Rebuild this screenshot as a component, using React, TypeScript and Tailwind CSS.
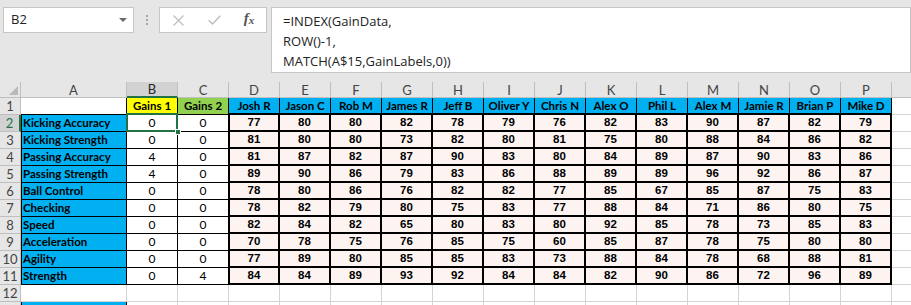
import React from 'react'

const COLS = ['A', 'B', 'C', 'D', 'E', 'F', 'G', 'H', 'I', 'J', 'K', 'L', 'M', 'N', 'O', 'P']

const players = [
  'Josh R', 'Jason C', 'Rob M', 'James R', 'Jeff B', 'Oliver Y', 'Chris N',
  'Alex O', 'Phil L', 'Alex M', 'Jamie R', 'Brian P', 'Mike D',
]

type Row = { label: string; g1: number; g2: number; vals: number[] }

const rows: Row[] = [
  { label: 'Kicking Accuracy', g1: 0, g2: 0, vals: [77, 80, 80, 82, 78, 79, 76, 82, 83, 90, 87, 82, 79] },
  { label: 'Kicking Strength', g1: 0, g2: 0, vals: [81, 80, 80, 73, 82, 80, 81, 75, 80, 88, 84, 86, 82] },
  { label: 'Passing Accuracy', g1: 4, g2: 0, vals: [81, 87, 82, 87, 90, 83, 80, 84, 89, 87, 90, 83, 86] },
  { label: 'Passing Strength', g1: 4, g2: 0, vals: [89, 90, 86, 79, 83, 86, 88, 89, 89, 96, 92, 86, 87] },
  { label: 'Ball Control', g1: 0, g2: 0, vals: [78, 80, 86, 76, 82, 82, 77, 85, 67, 85, 87, 75, 83] },
  { label: 'Checking', g1: 0, g2: 0, vals: [78, 82, 79, 80, 75, 83, 77, 88, 84, 71, 86, 80, 75] },
  { label: 'Speed', g1: 0, g2: 0, vals: [82, 84, 82, 65, 80, 83, 80, 92, 85, 78, 73, 85, 83] },
  { label: 'Acceleration', g1: 0, g2: 0, vals: [70, 78, 75, 76, 85, 75, 60, 85, 87, 78, 75, 80, 80] },
  { label: 'Agility', g1: 0, g2: 0, vals: [77, 89, 80, 85, 85, 83, 73, 88, 84, 78, 68, 88, 81] },
  { label: 'Strength', g1: 0, g2: 4, vals: [84, 84, 89, 93, 92, 84, 84, 82, 90, 86, 72, 96, 89] },
]

function FormulaBar() {
  return (
    <div className="flex h-[82px] items-start bg-[#e6e6e6] pt-[7px] pl-[3px]">
      {/* Name box */}
      <div className="flex h-[26px] w-[164px] items-center justify-between border border-[#c6c6c6] bg-white pr-[6px] pl-[7px] font-['Open_Sans',sans-serif] text-[13px] text-[#222]">
        <span>B2</span>
        <svg width="8" height="4" viewBox="0 0 8 4">
          <path d="M0 0H8L4 4Z" fill="#6a6a6a" />
        </svg>
      </div>

      {/* Grip dots */}
      <div className="flex h-[26px] w-[32px] flex-col items-center justify-center gap-[2px]">
        <span className="h-[2px] w-[2px] bg-[#a6a6a6]" />
        <span className="h-[2px] w-[2px] bg-[#a6a6a6]" />
        <span className="h-[2px] w-[2px] bg-[#a6a6a6]" />
      </div>

      {/* Cancel / Enter / fx */}
      <div className="flex h-[26px] w-[108px] items-center border border-[#c6c6c6] bg-white">
        <div className="flex w-[36px] justify-center pl-[1px]">
          <svg width="11" height="11" viewBox="0 0 11 11">
            <path d="M0.5 0.5L10.5 10.5M10.5 0.5L0.5 10.5" stroke="#bdbdbd" strokeWidth="1.2" fill="none" />
          </svg>
        </div>
        <div className="flex w-[36px] justify-center">
          <svg width="13" height="10" viewBox="0 0 13 10">
            <path d="M0.7 5.3L4.5 9L12.3 0.8" stroke="#bdbdbd" strokeWidth="1.4" fill="none" />
          </svg>
        </div>
        <div className="flex w-[34px] justify-center font-['Liberation_Serif',serif] text-[15px] leading-none font-bold text-[#555] italic">
          <span>f</span>
          <span className="text-[11px] leading-[18px]">x</span>
        </div>
      </div>

      {/* Formula text */}
      <div className="ml-[4px] h-[66px] w-[640px] shrink-0 border border-[#c6c6c6] bg-white pt-[3px] pl-[11px] font-['Open_Sans',sans-serif] text-[13px] leading-[20px] text-[#222]">
        <div>=INDEX(GainData,</div>
        <div>ROW()-1,</div>
        <div>MATCH(A$15,GainLabels,0))</div>
      </div>
    </div>
  )
}

function RowNum({ n, active }: { n?: number; active?: boolean }) {
  if (active) {
    return (
      <div className="flex items-center justify-center border-r-2 border-b border-r-[#217346] border-b-[#bfbfbf] bg-[#d2d2d2] text-[13px] text-[#217346]">
        {n}
      </div>
    )
  }
  return (
    <div className="flex items-center justify-center border-r border-b border-[#bfbfbf] bg-[#e6e6e6] text-[13px] text-[#444]">
      {n}
    </div>
  )
}

function Sheet() {
  return (
    <div className="grid grid-cols-[21px_106px_repeat(15,51px)_1fr] grid-rows-[16px_repeat(13,17px)] font-['Lato',sans-serif] leading-[16px] text-black">
      {/* Column headers */}
      <div className="relative border-r border-b border-[#bfbfbf] bg-[#e6e6e6]">
        <svg className="absolute right-[2px] bottom-[2px]" width="9" height="9" viewBox="0 0 9 9">
          <path d="M9 0V9H0Z" fill="#b9b9b9" />
        </svg>
      </div>
      {COLS.map((c) =>
        c === 'B' ? (
          <div
            key={c}
            className="flex items-center justify-center border-r border-b-2 border-r-[#bfbfbf] border-b-[#217346] bg-[#d2d2d2] text-[13px] text-[#262626]"
          >
            {c}
          </div>
        ) : (
          <div
            key={c}
            className="flex items-center justify-center border-r border-b border-[#bfbfbf] bg-[#e6e6e6] text-[13px] text-[#444]"
          >
            {c}
          </div>
        )
      )}
      <div className="border-b border-[#bfbfbf] bg-[#e6e6e6]" />

      {/* Row 1 */}
      <RowNum n={1} />
      <div className="border-r border-b border-black bg-white" />
      <div className="flex items-center justify-center border-r border-b border-black bg-[#ffff00] text-[11.5px] font-bold">
        Gains 1
      </div>
      <div className="flex items-center justify-center border-r border-b border-black bg-[#92d050] text-[11.5px] font-bold">
        Gains 2
      </div>
      {players.map((p) => (
        <div
          key={p}
          className="flex items-center justify-center border-r border-b-2 border-black bg-[#00b0f0] text-[11.5px] font-bold"
        >
          {p}
        </div>
      ))}
      <div className="border-b border-[#d4d4d4]" />

      {/* Rows 2 - 11 */}
      {rows.map((r, i) => (
        <React.Fragment key={r.label}>
          <RowNum n={i + 2} active={i === 0} />
          <div className="flex items-center border-r border-b border-l border-black bg-[#00b0f0] pl-[1px] text-[11.5px] font-bold">
            {r.label}
          </div>
          <div className="relative flex items-center justify-center border-r border-b border-black bg-white text-[12px]">
            {r.g1}
            {i === 0 && (
              <>
                <div className="absolute -top-[2px] -right-[1px] -bottom-[1px] -left-[1px] z-10 border-2 border-[#217346]" />
                <div className="absolute -right-[4px] -bottom-[4px] z-20 h-[6px] w-[6px] border border-white bg-[#217346]" />
              </>
            )}
          </div>
          <div className="flex items-center justify-center border-r border-b border-black bg-white text-[12px]">
            {r.g2}
          </div>
          {r.vals.map((v, j) => (
            <div
              key={j}
              className={
                j === 0
                  ? "flex items-center justify-center border-r-2 border-b-2 border-l border-black bg-[#fdf4f2] pb-[1px] font-['Liberation_Sans',Arial,sans-serif] text-[11.5px] font-bold"
                  : "flex items-center justify-center border-r-2 border-b-2 border-black bg-[#fdf4f2] pb-[1px] font-['Liberation_Sans',Arial,sans-serif] text-[11.5px] font-bold"
              }
            >
              {v}
            </div>
          ))}
          <div className="border-b border-[#d4d4d4]" />
        </React.Fragment>
      ))}

      {/* Row 12 */}
      <RowNum n={12} />
      {COLS.map((c) => (
        <div key={c} className="border-r border-b border-[#d4d4d4] bg-white" />
      ))}
      <div className="border-b border-[#d4d4d4]" />

      {/* Row 13 (only its top edge shows) */}
      <RowNum />
      <div className="border-r border-l border-black bg-[#00b0f0]" />
      {COLS.slice(1).map((c) => (
        <div key={c} className="border-r border-b border-[#d4d4d4] bg-white" />
      ))}
      <div className="border-b border-[#d4d4d4]" />
    </div>
  )
}

export default function App() {
  return (
    <div className="h-[305px] w-[911px] overflow-hidden bg-white">
      <FormulaBar />
      <Sheet />
    </div>
  )
}
